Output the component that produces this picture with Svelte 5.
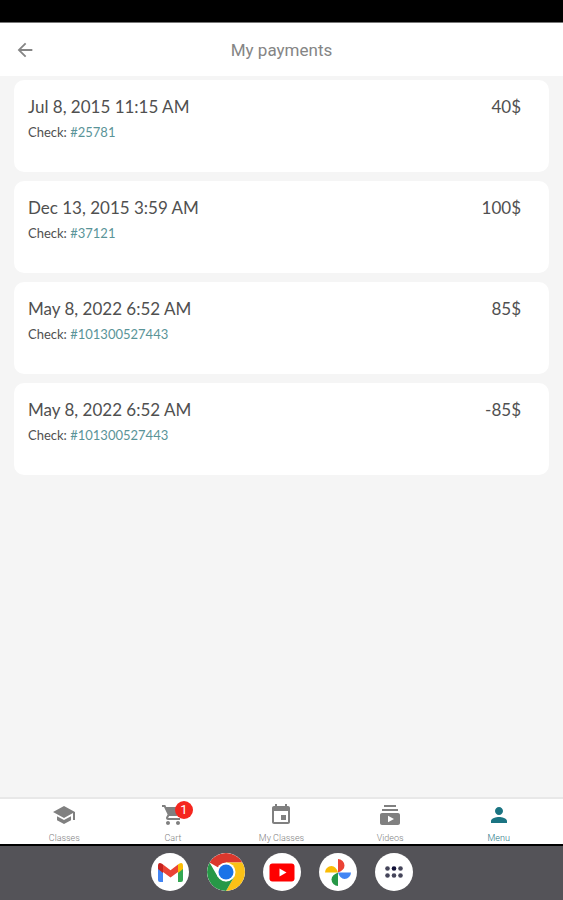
<script lang="ts">
	type Payment = { date: string; check: string; amount: string };

	const payments: Payment[] = [
		{ date: 'Jul 8, 2015 11:15 AM', check: '25781', amount: '40$' },
		{ date: 'Dec 13, 2015 3:59 AM', check: '37121', amount: '100$' },
		{ date: 'May 8, 2022 6:52 AM', check: '101300527443', amount: '85$' },
		{ date: 'May 8, 2022 6:52 AM', check: '101300527443', amount: '-85$' }
	];

	const tabs = [
		{ id: 'classes', label: 'Classes', icon: 'M5 13.18v4L12 21l7-3.82v-4L12 17l-7-3.82zM12 3L1 9l11 6 9-4.91V17h2V9L12 3z' },
		{ id: 'cart', label: 'Cart', icon: 'M7 18c-1.1 0-1.99.9-1.99 2S5.9 22 7 22s2-.9 2-2-.9-2-2-2zM1 2v2h2l3.6 7.59-1.35 2.45c-.16.28-.25.61-.25.96 0 1.1.9 2 2 2h12v-2H7.42c-.14 0-.25-.11-.25-.25l.03-.12.9-1.63h7.45c.75 0 1.41-.41 1.75-1.03l3.58-6.49A1 1 0 0 0 20 4H5.21l-.94-2H1zm16 16c-1.1 0-1.99.9-1.99 2s.89 2 1.99 2 2-.9 2-2-.9-2-2-2z' },
		{ id: 'my-classes', label: 'My Classes', icon: 'M17 12h-5v5h5v-5zM16 1v2H8V1H6v2H5c-1.11 0-1.99.9-1.99 2L3 19c0 1.1.89 2 2 2h14c1.1 0 2-.9 2-2V5c0-1.1-.9-2-2-2h-1V1h-2zm3 18H5V8h14v11z' },
		{ id: 'videos', label: 'Videos', icon: 'M20 8H4V6h16v2zm-2-6H6v2h12V2zm4 10v8c0 1.1-.9 2-2 2H4c-1.1 0-2-.9-2-2v-8c0-1.1.9-2 2-2h16c1.1 0 2 .9 2 2zm-6 4l-6-3.27v6.53L16 16z' },
		{ id: 'menu', label: 'Menu', icon: 'M12 12c2.21 0 4-1.79 4-4s-1.79-4-4-4-4 1.79-4 4 1.79 4 4 4zm0 2c-2.67 0-8 1.34-8 4v2h16v-2c0-2.66-5.33-4-8-4z' }
	];

	let active = $state('menu');
	let cartCount = $state(1);
</script>

<div class="screen">
	<div class="status-bar"></div>

	<header>
		<button class="back" aria-label="Back">
			<svg viewBox="0 0 24 24"><path d="M20 11H7.83l5.59-5.59L12 4l-8 8 8 8 1.41-1.41L7.83 13H20v-2z" /></svg>
		</button>
		<h1>My payments</h1>
	</header>

	<main>
		{#each payments as payment}
			<article class="card">
				<div>
					<div class="date">{payment.date}</div>
					<div class="check">Check: <a href="#{payment.check}">#{payment.check}</a></div>
				</div>
				<div class="amount">{payment.amount}</div>
			</article>
		{/each}
	</main>

	<nav class="tabs">
		{#each tabs as tab}
			<button class="tab" class:active={active === tab.id} onclick={() => (active = tab.id)}>
				<span class="tab-icon">
					<svg viewBox="0 0 24 24"><path d={tab.icon} /></svg>
					{#if tab.id === 'cart' && cartCount > 0}
						<span class="badge">{cartCount}</span>
					{/if}
				</span>
				<span>{tab.label}</span>
			</button>
		{/each}
	</nav>

	<footer class="dock">
		<button class="app" aria-label="Gmail">
			<svg viewBox="0 0 38 38">
				<path fill="#4285f4" d="M7 13v14q0 2 2 2h3V16z" />
				<path fill="#34a853" d="M32 13v14q0 2-2 2h-3V16z" />
				<path fill="#fbbc04" d="M27 11.5l1-.8q4-2 4 2.300v3l-5 4z" />
				<path fill="#c5221f" d="M12 11.5l-1-.8q-4-2-4 2.300v3l5 4z" />
				<path fill="#ea4335" d="M12 11.5l7.500 5.800 7.500-5.800v7.500l-7.500 5.500-7.500-5.500z" />
			</svg>
		</button>
		<button class="app" aria-label="Chrome">
			<svg viewBox="0 0 38 38">
				<path fill="#db382d" d="M19 19L2.550 9.500A19 19 0 0 1 35.450 9.500H19z" />
				<path fill="#fbc116" d="M35.450 9.500A19 19 0 0 1 19 38L27.230 23.750 19 9.500z" />
				<path fill="#279847" d="M19 38A19 19 0 0 1 2.550 9.500L10.770 23.750 19 28.500l8.230-4.750z" />
				<circle cx="19" cy="19" r="9.500" fill="#fff" />
				<circle cx="19" cy="19" r="7.500" fill="#1a73e8" />
			</svg>
		</button>
		<button class="app" aria-label="YouTube">
			<svg viewBox="0 0 38 38">
				<rect x="6.500" y="10.500" width="25" height="18" rx="3" fill="#f00" />
				<path fill="#fff" d="M16.500 15.500l7 4-7 4z" />
			</svg>
		</button>
		<button class="app" aria-label="Photos">
			<svg viewBox="0 0 38 38">
				<path fill="#ea4335" d="M19 6a6.500 6.500 0 0 1 6.500 6.500q0 4.500-6.500 7z" />
				<path fill="#4285f4" d="M32 19.500a6.500 6.500 0 0 1-6.500 6.500q-4.500 0-6.500-6.500z" />
				<path fill="#279847" d="M19 33a6.500 6.500 0 0 1-6.500-6.500q0-4.500 6.500-7z" />
				<path fill="#fbbc04" d="M6 19.500a6.500 6.500 0 0 1 6.500-6.500q4.500 0 6.500 6.500z" />
			</svg>
		</button>
		<button class="app" aria-label="All apps">
			<svg viewBox="0 0 38 38" fill="#45455a">
				<circle cx="12.500" cy="15.500" r="2.300" />
				<circle cx="19" cy="15.500" r="2.300" fill="#111138" />
				<circle cx="25.500" cy="15.500" r="2.300" />
				<circle cx="12.500" cy="22.500" r="2.300" />
				<circle cx="19" cy="22.500" r="2.300" />
				<circle cx="25.500" cy="22.500" r="2.300" />
			</svg>
		</button>
	</footer>
</div>

<style>
	:global(body) {
		margin: 0;
		background: #f5f5f5;
	}

	.screen {
		display: flex;
		flex-direction: column;
		min-height: 100vh;
		font-family: Lato, 'Open Sans', sans-serif;
		color: #505050;
	}

	button {
		border: none;
		padding: 0;
		background: none;
		font: inherit;
		color: inherit;
		cursor: pointer;
	}

	svg {
		display: block;
	}

	.status-bar {
		height: 22px;
		background: #000;
		border-bottom: 1px solid #777;
	}

	header {
		display: grid;
		grid-template-columns: 36px 1fr 36px;
		align-items: center;
		height: 53px;
		padding: 0 7px;
		background: #fff;
	}

	.back {
		display: flex;
		justify-content: center;
		color: #858585;
	}

	.back svg {
		width: 22px;
		height: 22px;
		fill: currentColor;
	}

	h1 {
		margin: 0;
		font-family: Roboto, sans-serif;
		font-size: 17px;
		font-weight: 400;
		line-height: 24px;
		text-align: center;
		color: #858585;
	}

	main {
		flex: 1;
		display: flex;
		flex-direction: column;
		gap: 9px;
		padding: 4px 14px 20px;
	}

	.card {
		display: flex;
		justify-content: space-between;
		min-height: 62px;
		padding: 15px 28px 15px 14px;
		border-radius: 10px;
		background: #fff;
	}

	.date,
	.amount {
		font-size: 17px;
		line-height: 24px;
	}

	.check {
		margin-top: 4px;
		font-size: 13px;
		line-height: 18px;
	}

	.check a {
		color: #5a9498;
		text-decoration: none;
	}

	.tabs {
		display: grid;
		grid-template-columns: repeat(5, 1fr);
		padding: 4px 10px 1px;
		border-top: 2px solid #e8e8e8;
		border-bottom: 2px solid #000;
		background: #fff;
	}

	.tab {
		display: flex;
		flex-direction: column;
		align-items: center;
		gap: 6px;
		font-family: Roboto, sans-serif;
		font-size: 9px;
		font-weight: 300;
		line-height: 10px;
		color: #808080;
	}

	.tab.active {
		color: #1b7482;
	}

	.tab-icon {
		position: relative;
	}

	.tab-icon svg {
		width: 24px;
		height: 24px;
		fill: currentColor;
	}

	.badge {
		position: absolute;
		top: -2px;
		right: -8px;
		width: 18px;
		height: 18px;
		border-radius: 50%;
		background: #f5261e;
		color: #fff;
		font-size: 13px;
		font-weight: 400;
		line-height: 18px;
	}

	.dock {
		display: flex;
		justify-content: center;
		gap: 18px;
		padding: 7px 0 9px;
		background: #545358;
	}

	.app {
		width: 38px;
		height: 38px;
		border-radius: 50%;
		background: #fff;
		overflow: hidden;
	}
</style>
